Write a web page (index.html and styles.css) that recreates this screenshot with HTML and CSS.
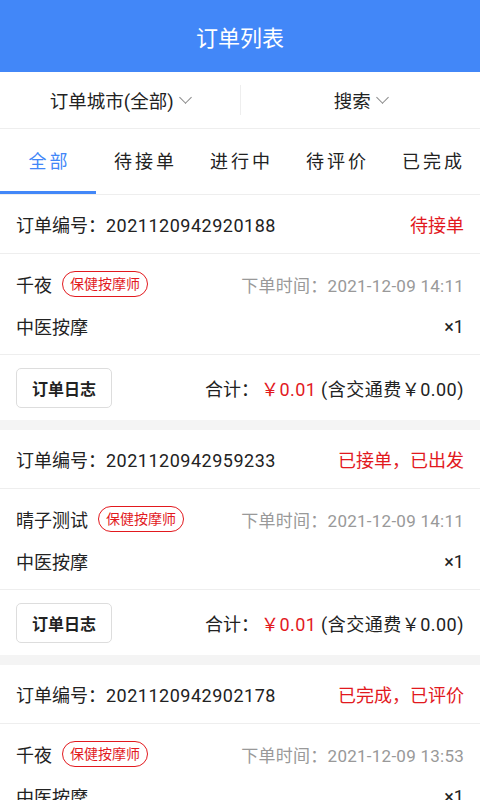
FILE: index.html
```html
<!DOCTYPE html>
<html>
<head>
    <title>订单列表</title>
    <meta charset="utf-8">
    <meta name="viewport" content="width=device-width, initial-scale=1">
    <link rel="stylesheet" href="styles.css">
</head>

<body>
    <div class="top-bar">订单列表</div>

    <div class="filter-bar">
        <div class="filter-item">订单城市(全部)<span class="arrow"></span></div>
        <div class="filter-item">搜索<span class="arrow"></span></div>
    </div>

    <div class="tabs">
        <div class="tab active">全部</div>
        <div class="tab">待接单</div>
        <div class="tab">进行中</div>
        <div class="tab">待评价</div>
        <div class="tab">已完成</div>
    </div>

    <div class="order-list">
        <div class="order">
            <div class="order-head">
                <span>订单编号：<span class="num">2021120942920188</span></span>
                <span class="status">待接单</span>
            </div>
            <div class="order-body">
                <div class="row">
                    <div class="who">千夜<span class="badge">保健按摩师</span></div>
                    <span class="time">下单时间：2021-12-09 14:11</span>
                </div>
                <div class="row">
                    <span>中医按摩</span>
                    <span>×1</span>
                </div>
            </div>
            <div class="order-foot">
                <button class="log-btn">订单日志</button>
                <div class="total">合计：<span class="price">￥0.01</span> <span class="num">(含交通费￥0.00)</span></div>
            </div>
        </div>

        <div class="order">
            <div class="order-head">
                <span>订单编号：<span class="num">2021120942959233</span></span>
                <span class="status">已接单，已出发</span>
            </div>
            <div class="order-body">
                <div class="row">
                    <div class="who">晴子测试<span class="badge">保健按摩师</span></div>
                    <span class="time">下单时间：2021-12-09 14:11</span>
                </div>
                <div class="row">
                    <span>中医按摩</span>
                    <span>×1</span>
                </div>
            </div>
            <div class="order-foot">
                <button class="log-btn">订单日志</button>
                <div class="total">合计：<span class="price">￥0.01</span> <span class="num">(含交通费￥0.00)</span></div>
            </div>
        </div>

        <div class="order">
            <div class="order-head">
                <span>订单编号：<span class="num">2021120942902178</span></span>
                <span class="status">已完成，已评价</span>
            </div>
            <div class="order-body">
                <div class="row">
                    <div class="who">千夜<span class="badge">保健按摩师</span></div>
                    <span class="time">下单时间：2021-12-09 13:53</span>
                </div>
                <div class="row">
                    <span>中医按摩</span>
                    <span>×1</span>
                </div>
            </div>
            <div class="order-foot">
                <button class="log-btn">订单日志</button>
                <div class="total">合计：<span class="price">￥0.01</span> <span class="num">(含交通费￥0.00)</span></div>
            </div>
        </div>
    </div>
</body>
</html>
```

FILE: styles.css
```css
body {
    margin: 0;
    font-family: Roboto, "Noto Sans CJK SC", sans-serif;
    font-size: 18px;
    color: #222;
    background-color: #f4f4f4;
}

.top-bar {
    height: 72px;
    display: flex;
    align-items: center;
    justify-content: center;
    background-color: #4287f8;
    color: #fff;
    font-size: 22px;
}

.filter-bar {
    height: 56px;
    display: flex;
    align-items: center;
    background-color: #fff;
    border-bottom: 1px solid #eee;
}

.filter-item {
    flex: 1;
    display: flex;
    align-items: center;
    justify-content: center;
    font-size: 18.5px;
}

.filter-item + .filter-item {
    border-left: 1px solid #eee;
    height: 30px;
}

.arrow {
    width: 8px;
    height: 8px;
    margin: -5px 0 0 7px;
    border-right: 1px solid #888;
    border-bottom: 1px solid #888;
    transform: rotate(45deg);
}

.tabs {
    display: flex;
    height: 65px;
    background-color: #fff;
    border-bottom: 1px solid #eee;
}

.tab {
    flex: 1;
    display: flex;
    align-items: center;
    justify-content: center;
    font-size: 18px;
    letter-spacing: 3px;
    text-indent: 3px;
    border-bottom: 3px solid transparent;
}

.tab.active {
    color: #4287f8;
    border-bottom-color: #4287f8;
}

.order {
    background-color: #fff;
    margin-bottom: 10px;
}

.order-head {
    height: 58px;
    padding: 0 16px;
    display: flex;
    align-items: center;
    justify-content: space-between;
    border-bottom: 1px solid #eee;
}

.num {
    letter-spacing: 0.5px;
}

.status {
    color: #e2191e;
}

.order-body {
    padding: 14px 16px 12px;
    display: flex;
    flex-direction: column;
    gap: 10px;
    border-bottom: 1px solid #eee;
}

.row {
    height: 32px;
    display: flex;
    align-items: center;
    justify-content: space-between;
}

.who {
    display: flex;
    align-items: center;
}

.badge {
    margin-left: 10px;
    padding: 0 7px;
    height: 24px;
    line-height: 24px;
    border: 1.5px solid #e2191e;
    border-radius: 14px;
    color: #e2191e;
    font-size: 14px;
}

.time {
    color: #999;
    font-size: 17px;
    letter-spacing: 0.25px;
}

.order-foot {
    padding: 13px 16px 12px;
    display: flex;
    align-items: center;
    justify-content: space-between;
}

.log-btn {
    width: 96px;
    height: 40px;
    background-color: #fff;
    border: 1px solid #ddd;
    border-radius: 5px;
    font-family: inherit;
    font-size: 16px;
    font-weight: bold;
    color: #222;
}

.price {
    color: #e2191e;
    margin-left: 2px;
    letter-spacing: 0.5px;
}
```
